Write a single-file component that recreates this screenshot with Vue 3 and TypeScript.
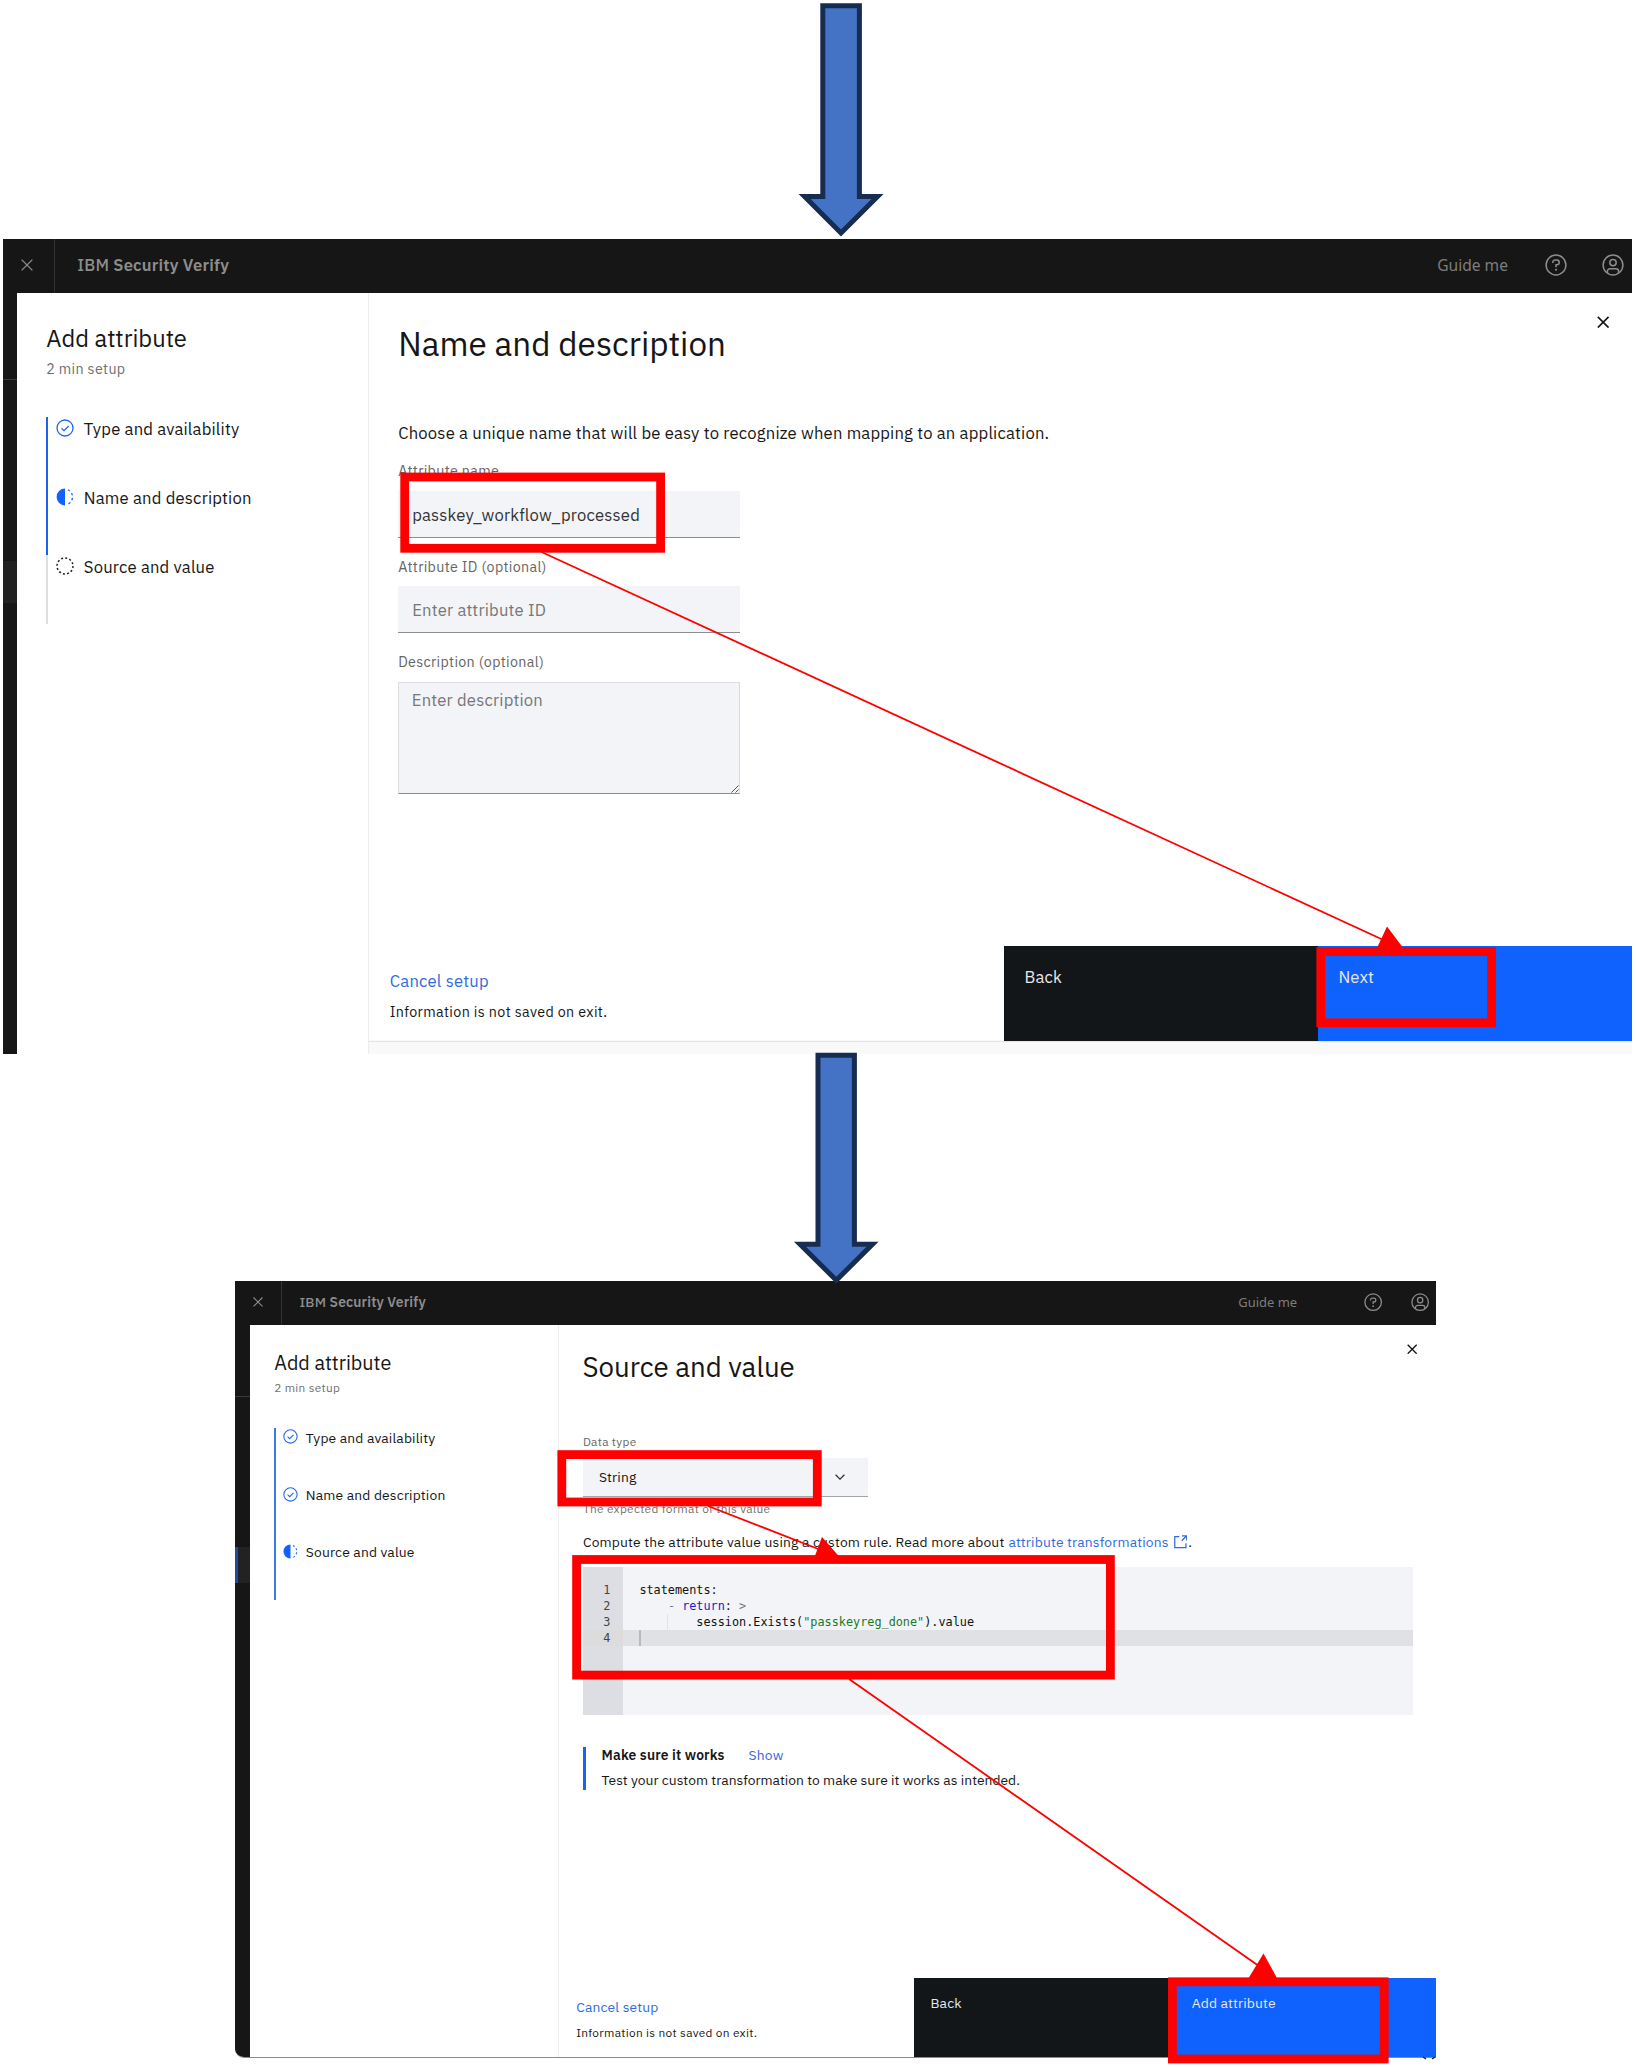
<script setup lang="ts">
type StepState = 'done' | 'current' | 'todo'
interface Step { label: string; state: StepState }
interface Screen { id: 'name' | 'source'; title: string; next: string; steps: Step[] }
interface Token { text: string; kind?: string }

const screens: Screen[] = [
  {
    id: 'name',
    title: 'Name and description',
    next: 'Next',
    steps: [
      { label: 'Type and availability', state: 'done' },
      { label: 'Name and description', state: 'current' },
      { label: 'Source and value', state: 'todo' },
    ],
  },
  {
    id: 'source',
    title: 'Source and value',
    next: 'Add attribute',
    steps: [
      { label: 'Type and availability', state: 'done' },
      { label: 'Name and description', state: 'done' },
      { label: 'Source and value', state: 'current' },
    ],
  },
]

const code: Token[][] = [
  [{ text: 'statements:' }],
  [{ text: '    ' }, { text: '-', kind: 'dim' }, { text: ' ' }, { text: 'return', kind: 'key' }, { text: ': ' }, { text: '>', kind: 'dim' }],
  [{ text: '        session.Exists(' }, { text: '"passkeyreg_done"', kind: 'str' }, { text: ').value' }],
  [],
]
</script>

<template>
  <div class="page">
    <section v-for="s in screens" :key="s.id" class="screen" :class="s.id">
      <header class="topbar">
        <span class="menu">
          <svg class="x" viewBox="0 0 12 12"><path d="M.6.6l10.8 10.8M11.4.6L.6 11.4" /></svg>
        </span>
        <span class="brand"><span class="ibm">IBM</span> Security Verify</span>
        <span class="guide">Guide me</span>
        <svg class="round help" viewBox="0 0 22 22">
          <circle cx="11" cy="11" r="9.9" />
          <path d="M7.8 8.9V8.3a2.2 2.2 0 0 1 2.2-2.2h1.9a2.3 2.3 0 0 1 0 4.6H11v2.5" />
          <circle class="dot" cx="11" cy="15.8" r="1.05" />
        </svg>
        <svg class="round" viewBox="0 0 22 22">
          <circle cx="11" cy="11" r="9.9" />
          <circle cx="11" cy="8.6" r="3.2" />
          <path d="M5.4 19v-1.6a2.6 2.6 0 0 1 2.6-2.6h6a2.6 2.6 0 0 1 2.6 2.6V19" />
        </svg>
      </header>

      <div class="body">
        <div class="rail"><div class="rail-top"></div><div class="rail-mid"></div><div class="rail-active"></div></div>
        <aside class="side">
          <h2>Add attribute</h2>
          <p class="sub">2 min setup</p>
          <ol>
            <li v-for="st in s.steps" :key="st.label" :class="st.state">
              <svg viewBox="0 0 18 18">
                <template v-if="st.state === 'done'">
                  <circle cx="9" cy="9" r="8" /><path d="M5.5 9.2l2.5 2.4 4.6-4.6" />
                </template>
                <template v-else-if="st.state === 'current'">
                  <path class="fill" d="M9 .6a8.4 8.4 0 0 0 0 16.8z" />
                  <path class="dash" d="M11 1.4a8 8 0 0 1 0 15.2" />
                </template>
                <circle v-else class="dots" cx="9" cy="9" r="8" />
              </svg>
              <span>{{ st.label }}</span>
            </li>
          </ol>
        </aside>

        <main>
          <svg class="close" viewBox="0 0 12 12"><path d="M.8.8l10.4 10.4M11.2.8L.8 11.2" /></svg>
          <h1>{{ s.title }}</h1>

          <div v-if="s.id === 'name'" class="form">
            <p class="intro">Choose a unique name that will be easy to recognize when mapping to an application.</p>
            <label>Attribute name</label>
            <div class="input value">passkey_workflow_processed</div>
            <label>Attribute ID (optional)</label>
            <div class="input">Enter attribute ID</div>
            <label>Description (optional)</label>
            <div class="textarea">
              <span>Enter description</span>
              <svg viewBox="0 0 8 8"><path d="M.5 7.5l7-7M4.5 7.5l3-3" /></svg>
            </div>
          </div>

          <div v-else class="form">
            <label>Data type</label>
            <div class="select">
              <span>String</span>
              <svg viewBox="0 0 10 6"><path d="M.6.8L5 5.1 9.4.8" /></svg>
            </div>
            <p class="helper">The expected format of this value</p>
            <p class="intro">
              <span>Compute the attribute value using a custom rule. Read more about</span>
              <a>attribute transformations</a>
              <svg viewBox="0 0 14 14"><path d="M5.5 1.6H.8v11.6h11.6V8.5M8.3.8h4.9v4.9M13.2.8L8 6" /></svg>
              <span>.</span>
            </p>
            <div class="editor">
              <div v-for="(line, i) in code" :key="i" class="line" :class="{ active: i === 3, nested: i === 2 }">
                <span class="num">{{ i + 1 }}</span>
                <code><span v-for="(t, j) in line" :key="j" :class="t.kind">{{ t.text }}</span><i v-if="i === 3" class="caret"></i></code>
              </div>
            </div>
            <div class="note">
              <p class="note-head"><b>Make sure it works</b><a>Show</a></p>
              <p class="note-text">Test your custom transformation to make sure it works as intended.</p>
            </div>
          </div>

          <footer>
            <div class="cancel">
              <a>Cancel setup</a>
              <p>Information is not saved on exit.</p>
            </div>
            <div class="btn back">Back</div>
            <div class="btn next">{{ s.next }}</div>
          </footer>
        </main>
      </div>
    </section>

    <svg class="marks" viewBox="0 0 1636 2067">
      <g class="block">
        <path d="M822.8 5.8H859.4V196.6H877.5L841 233 804.6 196.6H822.8Z" />
        <path d="M818 1055.2H854.4V1244.2H872.5L836.3 1280.2 800 1244.2H818Z" />
      </g>
      <g class="boxes">
        <rect x="404.7" y="477" width="255.9" height="71.3" />
        <rect x="1320.8" y="951.5" width="170.7" height="71.3" />
        <rect x="561.8" y="1454.6" width="255.5" height="47.4" />
        <rect x="576.6" y="1559.5" width="533.8" height="115.6" />
        <rect x="1172.4" y="1981.8" width="211.8" height="77.2" />
      </g>
      <g class="lines">
        <path d="M541.5 552L1390 943M708 1506L826 1552M849 1679L1266 1971" />
      </g>
      <path class="heads" d="M1387 926.5L1404 949H1376.5ZM822 1537L839.5 1557H814.5ZM1263.5 1953.5L1277.5 1979H1248Z" />
      <path class="corner" d="M1423 2057l3 1.8M1432 2058.8l3-1.8" />
    </svg>
  </div>
</template>

<style>
body { margin: 0; background: #fff; }
</style>

<style scoped>
.page {
  position: relative;
  width: 1636px;
  height: 2067px;
  overflow: hidden;
  box-sizing: border-box;
  padding-top: 238.6px;
  background: #fff;
  color: #161616;
  font-family: "IBM Plex Sans", Roboto, "Noto Sans", sans-serif;
}
h1, h2, p, ol { margin: 0; padding: 0; font-weight: 400; list-style: none; }
svg { display: block; flex: none; fill: none; stroke: currentColor; }
a { color: #2f6bdc; }
.screen {
  --u: 1px;
  box-sizing: border-box;
  display: flex;
  flex-direction: column;
  font-size: calc(var(--u) * 16.65);
  letter-spacing: .0114em;
}
.name { width: 1628.8px; height: 815px; margin-left: 3.4px; }
.source {
  --u: .832px;
  width: 1200.8px;
  height: 777px;
  margin: 227.1px 0 0 235.3px;
  border-bottom: 1.5px solid #8b8b8b;
  border-bottom-left-radius: 9px;
  overflow: hidden;
}

.topbar {
  display: flex;
  align-items: center;
  flex: none;
  height: 54.5px;
  box-sizing: border-box;
  padding: 0 8.2px 1.6px 0;
  background: linear-gradient(#333, #333) 50.4px 0 / 1px 100% no-repeat, #161616;
  color: #8d8d8d;
}
.source .topbar {
  height: 44.8px;
  padding: 0 6.5px 2.4px 0;
  background: linear-gradient(#333, #333) 45.4px 0 / 1px 100% no-repeat, #161616;
}
.menu {
  display: flex;
  justify-content: flex-end;
  box-sizing: border-box;
  width: 51.4px;
  padding-right: 21.4px;
}
.source .menu { width: 46.2px; padding-right: 18.5px; }
.x { width: calc(var(--u) * 12); height: calc(var(--u) * 12); stroke-width: 1.3; }
.brand { margin-left: calc(var(--u) * 22.4); font-weight: 600; margin-right: auto; }
.source .brand { margin-left: 18px; }
.ibm { font-weight: 500; }
.guide { font-family: "Noto Sans", "Open Sans", sans-serif; font-size: calc(var(--u) * 15.6); letter-spacing: 0; color: #7d7d7d; margin-right: 37px; }
.source .guide { margin-right: 66.8px; }
.round { width: calc(var(--u) * 22); height: calc(var(--u) * 22); stroke-width: 1.5; color: #8d8d8d; }
.help { margin-right: calc(var(--u) * 35); }
.dot { fill: currentColor; stroke: none; }

.body { display: flex; flex: 1; min-height: 0; background: #fff; }
.rail { display: flex; flex-direction: column; width: 13.8px; background: #161616; }
.source .rail { width: 14.8px; }
.rail-top { height: 86px; border-bottom: 1px solid #393939; }
.rail-mid { height: 181px; }
.rail-active { height: 42px; background: #212121; }
.source .rail-top { height: 71px; }
.source .rail-mid { height: 150px; }
.source .rail-active { height: 36px; border-left: 3px solid #24479b; background: #222; }

.side { width: 351.6px; flex: none; box-sizing: border-box; padding: calc(var(--u) * 30.9) 0 0 calc(var(--u) * 29); border-right: 1px solid #ededf0; }
.source .side { width: 308.6px; }
.side h2 { font-size: calc(var(--u) * 23.75); line-height: calc(var(--u) * 30); letter-spacing: 0; }
.sub { margin-top: calc(var(--u) * 4.9); font-size: calc(var(--u) * 14.27); line-height: calc(var(--u) * 20); letter-spacing: .0235em; color: #6f6f6f; }
.source .sub { margin-top: 3.5px; margin-bottom: .6px; }
.side ol { margin-top: calc(var(--u) * 37.85); }
.side li {
  display: flex;
  align-items: flex-start;
  box-sizing: border-box;
  height: calc(var(--u) * 69);
  border-left: calc(var(--u) * 2.3) solid #1a63ec;
}
.source .side li { border-left: 2.3px solid #4079e6; }
.side li.todo { border-left-color: #dedede; }
.side li svg { width: calc(var(--u) * 18); height: calc(var(--u) * 18); margin: calc(var(--u) * 2) 0 0 calc(var(--u) * 7.8); color: #1f66e8; stroke-width: 1.3; }
.side li.todo svg { color: #222; }
.side li span { margin: calc(var(--u) * 1) 0 0 calc(var(--u) * 9.8); line-height: calc(var(--u) * 22); }
.side .fill { fill: #0f62fe; stroke: none; }
.side .dash { stroke-dasharray: 2.4 2.5; stroke-dashoffset: -1; }
.side .dots { stroke-dasharray: 2 2.19; stroke-width: 1.5; }

main { position: relative; display: flex; flex-direction: column; flex: 1; min-width: 0; }
.name main { background: linear-gradient(#fff, #fff) 0 0 / 100% 747.2px no-repeat, #f9f9fa; }
.close { position: absolute; top: 22.6px; right: 22.5px; width: 12.4px; height: 12.4px; stroke-width: 1.6; }
.source .close { top: 18.5px; right: 18.3px; width: 10.4px; height: 10.4px; }
h1 { margin: 30.6px 0 0 29.4px; font-size: calc(var(--u) * 33.25); line-height: 40px; letter-spacing: 0; }
.source h1 { margin: 24.8px 0 0 23.8px; line-height: 34px; }
.form { margin-left: calc(var(--u) * 29.4); }
.source .form { margin-left: 24.2px; }
.form label { display: block; margin-top: 18.9px; font-size: 14.27px; line-height: 20px; letter-spacing: .0235em; color: #656565; }
.name .intro { margin-top: 58.4px; line-height: 22px; }
.name .intro + label { margin-top: 17.4px; }
.input {
  box-sizing: border-box;
  width: 342px;
  height: 47.3px;
  margin-top: 9.2px;
  padding-left: 14px;
  border-bottom: 1.3px solid #8d8d8d;
  background: #f2f4f8;
  line-height: 48px;
  color: #777;
}
.value { color: #333; }
.textarea {
  display: flex;
  justify-content: space-between;
  align-items: flex-end;
  box-sizing: border-box;
  width: 342px;
  height: 112px;
  margin-top: 9.4px;
  border: 1.2px solid #dcdde1;
  border-bottom-color: #8d8d8d;
  background: #f2f4f8;
  color: #777;
}
.textarea span { align-self: flex-start; margin: 6px 0 0 12.6px; line-height: 22px; }
.textarea svg { width: 8px; height: 8px; color: #555; }

.source .form label { margin-top: 49.4px; font-size: 11.87px; line-height: 16px; }
.select {
  display: flex;
  align-items: center;
  justify-content: space-between;
  box-sizing: border-box;
  width: 285px;
  height: 39.3px;
  margin-top: 8.3px;
  padding: .6px 23px 0 16px;
  border-bottom: 1.4px solid #a3a5aa;
  background: #f2f4f8;
}
.select svg { width: 10px; height: 6px; stroke-width: 1.3; color: #333; }
.helper { margin-top: 4px; font-size: 11.87px; line-height: 16px; letter-spacing: .0255em; color: #6f6f6f; }
.source .intro { display: flex; margin-top: 15.5px; line-height: 18px; white-space: nowrap; }
.intro a { margin-left: 4px; }
.intro svg { width: 13.5px; height: 13.5px; margin: 2.4px 1px 0 5px; stroke-width: 1.3; color: #2f6bdc; }
.editor {
  box-sizing: border-box;
  width: 830px;
  height: 147.4px;
  margin-top: 16.5px;
  padding-top: 15.2px;
  background: linear-gradient(#dddee4, #dddee4) 0 0 / 40.3px 100% no-repeat, #f2f4f8;
  font: 11.84px/17.6px "DejaVu Sans Mono", "Liberation Mono", monospace;
  letter-spacing: 0;
}
.line { display: flex; height: 15.9px; }
.line.active { background: linear-gradient(#dcdcdd, #dcdcdd) 0 0 / 40.3px 100% no-repeat, #e0e1e5; }
.num { width: 27.5px; margin-right: 29px; text-align: right; color: #444; }
.line code { font: inherit; white-space: pre; color: #111; }
.line .dim { color: #777; }
.line .key { color: #1a1acb; }
.line .str { color: #1b7a1b; }
.nested code { background: linear-gradient(#e2e3e7, #e2e3e7) 28px 0 / 1px 100% no-repeat; }
.caret { display: block; width: 2px; height: 15.9px; background: #b9bac0; }
.note { box-sizing: border-box; height: 43.4px; margin-top: 32px; padding-left: 15.7px; border-left: 3px solid #1764f5; line-height: 17.4px; }
.note-head { display: flex; gap: 24px; }
.note-head b { font-weight: 600; }
.note-text { margin-top: 8.2px; letter-spacing: .0008em; }

footer { display: flex; height: calc(var(--u) * 95); margin-top: auto; }
.name footer { margin-bottom: 12.8px; box-shadow: 0 1px 0 #e2e4e8; }
.cancel { flex: 1; padding: 24.6px 0 0 21px; }
.source .cancel { padding: 19.9px 0 0 17.5px; }
.cancel a { display: block; line-height: calc(var(--u) * 22); }
.cancel p { margin-top: calc(var(--u) * 9.6); font-size: calc(var(--u) * 14.27); line-height: calc(var(--u) * 20); letter-spacing: .0255em; }
.source .cancel p { margin-top: 9px; }
.btn { box-sizing: border-box; width: calc(var(--u) * 314); padding: calc(var(--u) * 20.1) 0 0 calc(var(--u) * 20.2); line-height: calc(var(--u) * 22); color: #e8e8e8; }
.back { background: #121619; }
.next { background: #0f62fe; }

.marks { position: absolute; inset: 0; width: 1636px; height: 2067px; }
.block { fill: #4472c4; stroke: #172c51; stroke-width: 5; }
.boxes { stroke: #f00; stroke-width: 8.8; }
.lines { stroke: #f00; stroke-width: 1.8; }
.heads { fill: #f00; stroke: none; }
.corner { stroke: #222; stroke-width: 1.4; }
</style>
